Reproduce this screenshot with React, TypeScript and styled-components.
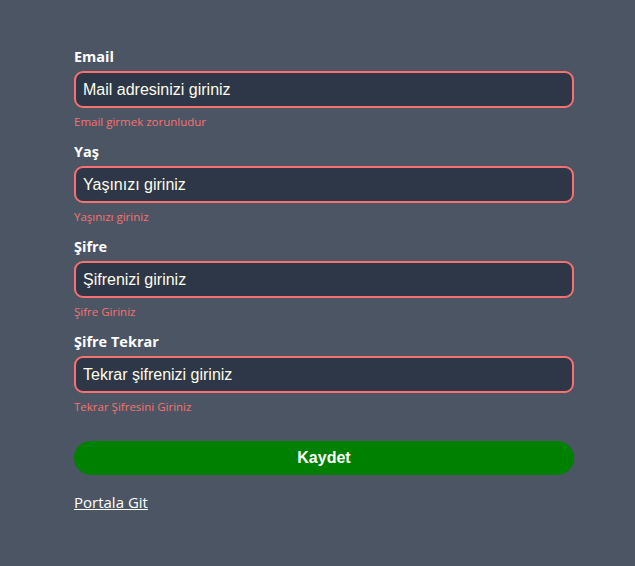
import React from "react";
import styled, { createGlobalStyle } from "styled-components";

const Global = createGlobalStyle`
  html, body { margin: 0; padding: 0; background: #4b5563; }
  body { font-family: "Open Sans", "Noto Sans", sans-serif; }
`;

const Page = styled.div`
  min-height: 566px;
  background: #4b5563;
  padding: 47px 0 0 74px;
  box-sizing: border-box;
`;

const Form = styled.form`
  width: 500px;
  display: flex;
  flex-direction: column;
`;

const Field = styled.div`
  display: flex;
  flex-direction: column;
  margin-bottom: 12px;
`;

const Label = styled.label`
  font-family: "Open Sans", "Noto Sans", sans-serif;
  font-weight: 700;
  font-size: 14.5px;
  line-height: 20px;
  color: #ffffff;
  margin-bottom: 4px;
`;

const Input = styled.input`
  box-sizing: border-box;
  height: 37px;
  width: 100%;
  background: #2d3748;
  border: 2px solid #f87171;
  border-radius: 9px;
  padding: 0 7px;
  font-family: "Liberation Sans", Arial, sans-serif;
  font-size: 16px;
  color: #fefce8;
  outline: none;
  &::placeholder { color: #fefce8; opacity: 1; }
`;

const ErrorText = styled.span`
  margin-top: 6px;
  font-family: "Open Sans", "Noto Sans", sans-serif;
  font-size: 11.5px;
  line-height: 16px;
  color: #f87171;
`;

const Button = styled.button`
  margin-top: 14px;
  height: 34px;
  width: 100%;
  border: none;
  border-radius: 17px;
  background: #008000;
  color: #ffffff;
  font-family: "Liberation Sans", Arial, sans-serif;
  font-weight: 700;
  font-size: 16px;
  cursor: pointer;
`;

const Link = styled.a`
  margin-top: 16px;
  align-self: flex-start;
  font-family: "Open Sans", "Noto Sans", sans-serif;
  font-size: 15px;
  line-height: 22px;
  color: #ffffff;
  text-decoration: underline;
`;

const fields = [
  { label: "Email", placeholder: "Mail adresinizi giriniz", error: "Email girmek zorunludur", type: "text" },
  { label: "Yaş", placeholder: "Yaşınızı giriniz", error: "Yaşınızı giriniz", type: "text" },
  { label: "Şifre", placeholder: "Şifrenizi giriniz", error: "Şifre Giriniz", type: "password" },
  { label: "Şifre Tekrar", placeholder: "Tekrar şifrenizi giriniz", error: "Tekrar Şifresini Giriniz", type: "password" },
];

export default function App() {
  return (
    <Page>
      <Global />
      <Form onSubmit={(e) => e.preventDefault()}>
        {fields.map((f) => (
          <Field key={f.label}>
            <Label>{f.label}</Label>
            <Input type={f.type} placeholder={f.placeholder} />
            <ErrorText>{f.error}</ErrorText>
          </Field>
        ))}
        <Button type="submit">Kaydet</Button>
        <Link href="#">Portala Git</Link>
      </Form>
    </Page>
  );
}
